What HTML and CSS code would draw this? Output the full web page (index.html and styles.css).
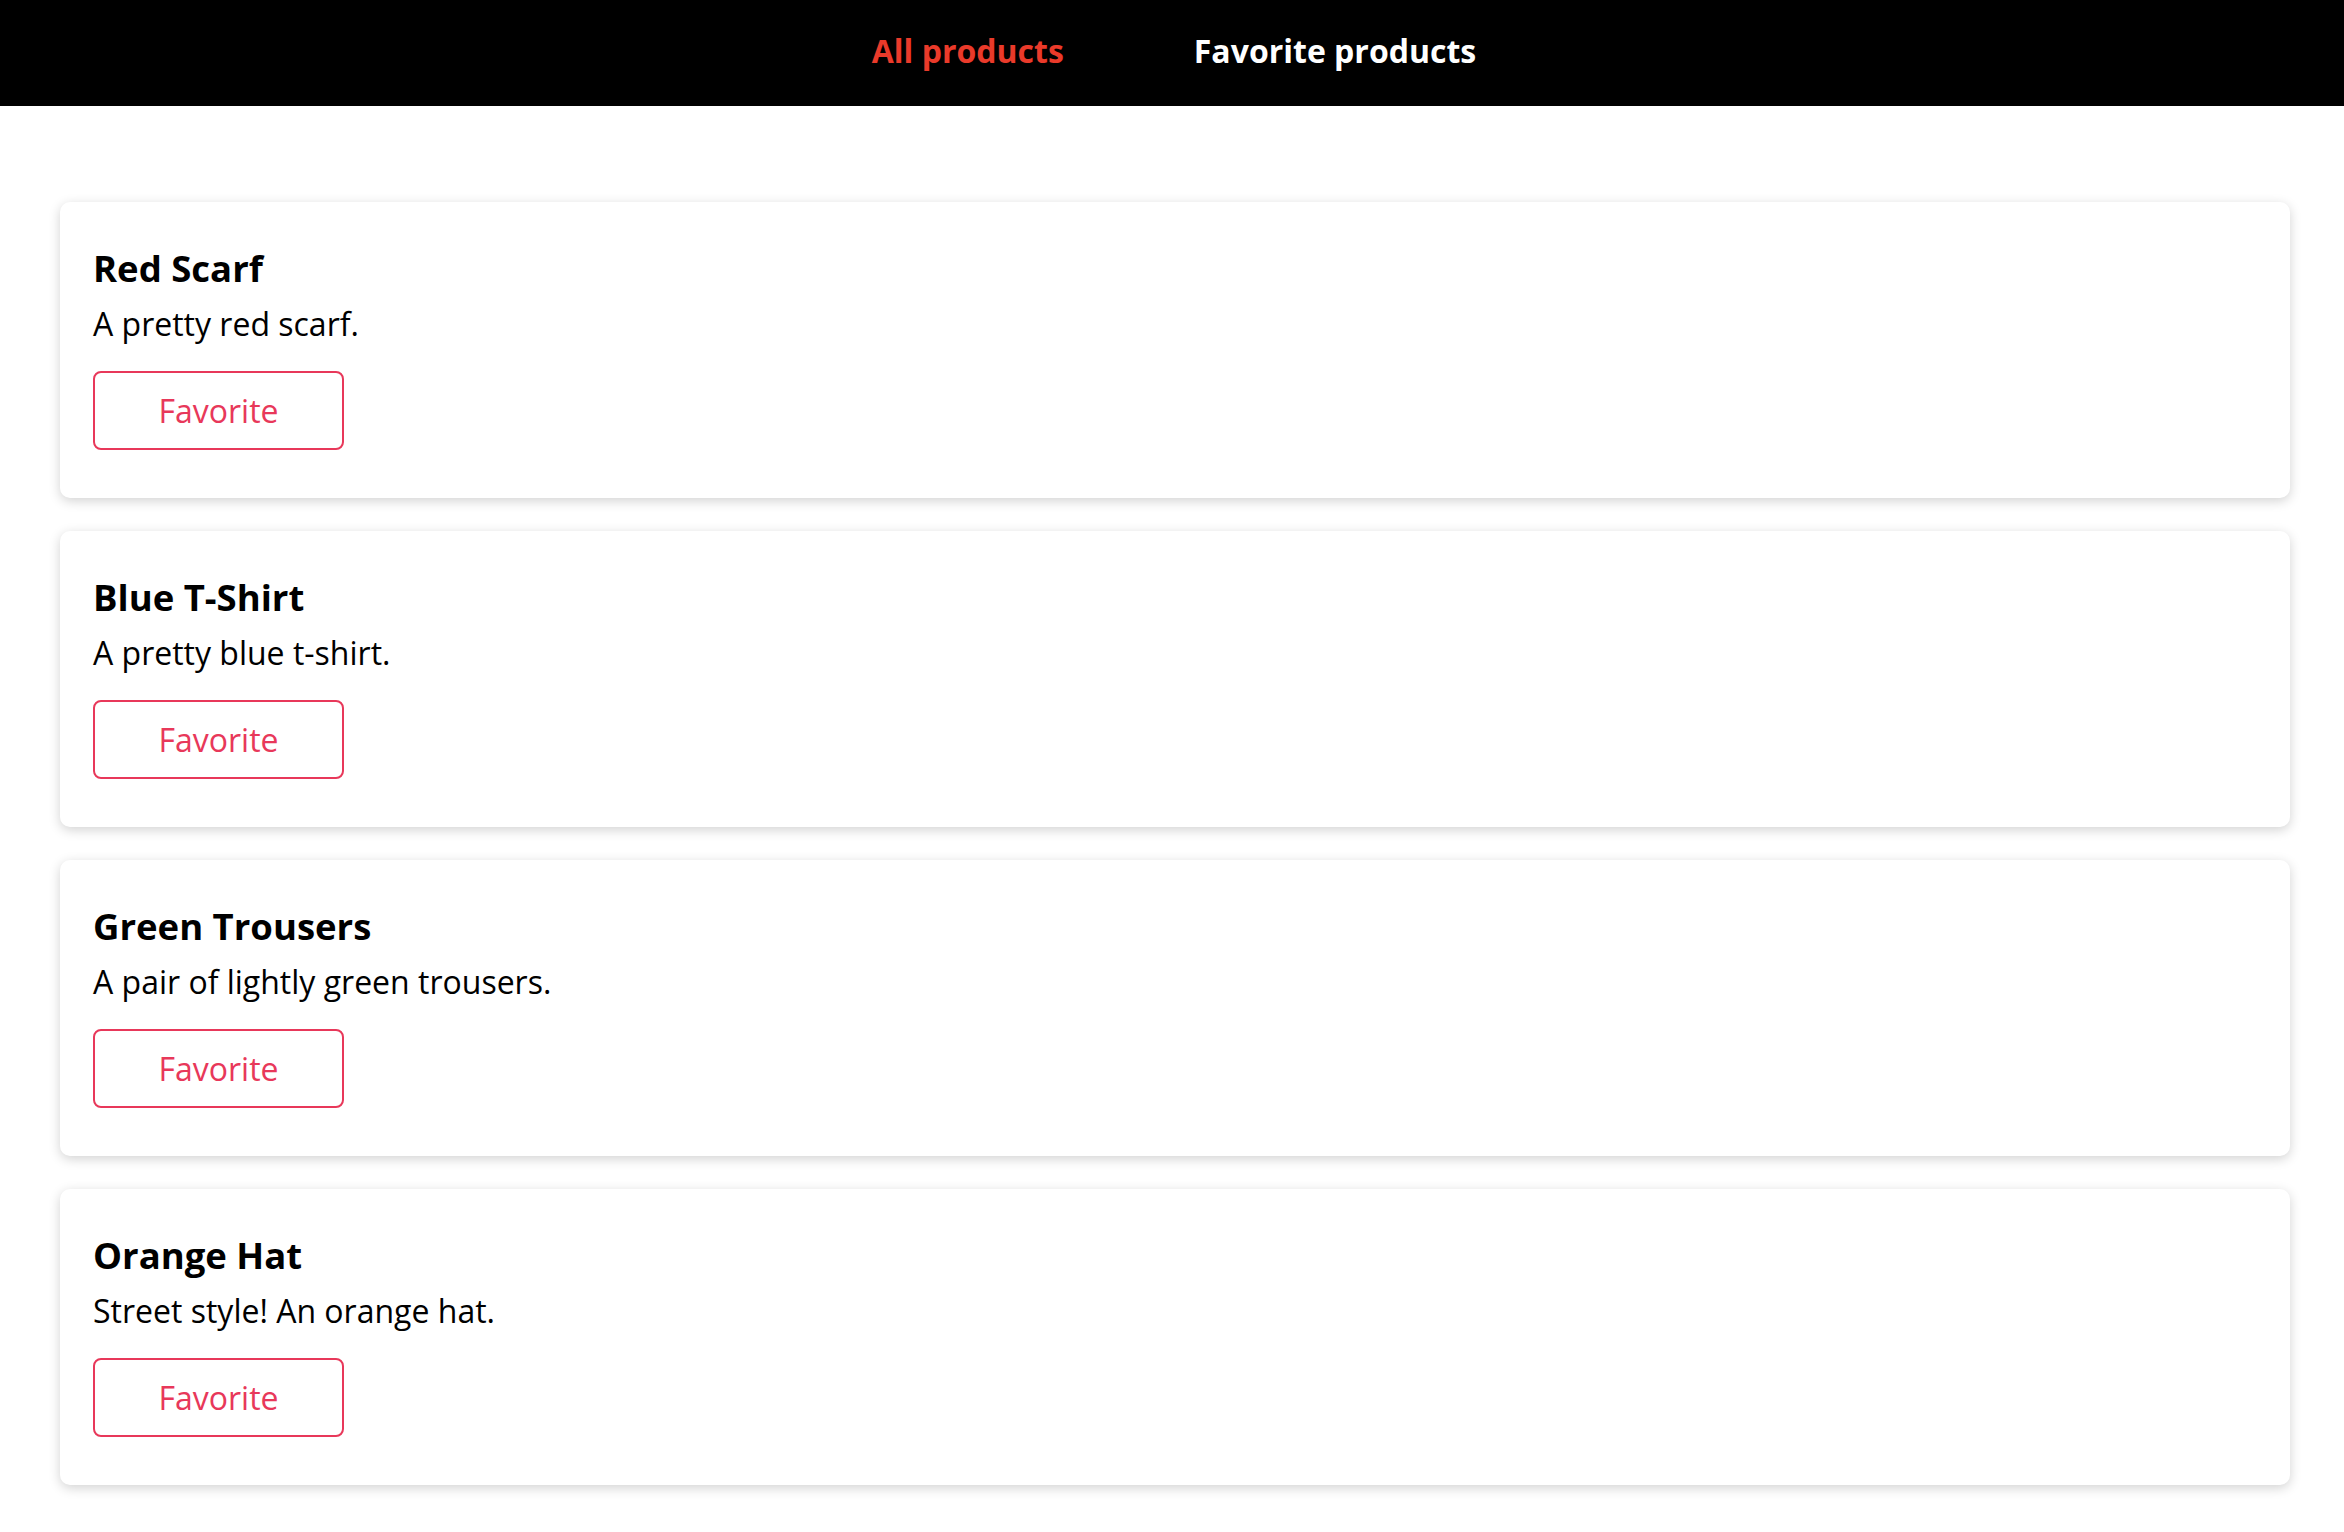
FILE: index.html
```html
<!DOCTYPE html>
<html lang="en">
<head>
<meta charset="utf-8">
<title>Products</title>
<link rel="stylesheet" href="styles.css">
</head>
<body>
<header class="main-header">
  <nav class="main-nav">
    <a class="nav-link active" href="#">All products</a>
    <a class="nav-link" href="#">Favorite products</a>
  </nav>
</header>
<main class="products">
  <ul class="products-list">
    <li class="card">
      <h2 class="card-title">Red Scarf</h2>
      <p class="card-desc">A pretty red scarf.</p>
      <button class="fav-btn">Favorite</button>
    </li>
    <li class="card">
      <h2 class="card-title">Blue T-Shirt</h2>
      <p class="card-desc">A pretty blue t-shirt.</p>
      <button class="fav-btn">Favorite</button>
    </li>
    <li class="card">
      <h2 class="card-title">Green Trousers</h2>
      <p class="card-desc">A pair of lightly green trousers.</p>
      <button class="fav-btn">Favorite</button>
    </li>
    <li class="card">
      <h2 class="card-title">Orange Hat</h2>
      <p class="card-desc">Street style! An orange hat.</p>
      <button class="fav-btn">Favorite</button>
    </li>
  </ul>
</main>
</body>
</html>
```

FILE: styles.css
```css
* {
  box-sizing: border-box;
}

html, body {
  margin: 0;
  padding: 0;
  background: #ffffff;
  font-family: "Open Sans", "Noto Sans", sans-serif;
  color: #000000;
}

.main-header {
  height: 106px;
  background: #000000;
  padding-top: 29px;
}

.main-nav {
  display: flex;
  justify-content: center;
  gap: 130px;
  padding-left: 4px;
}

.nav-link {
  font-size: 32px;
  font-weight: 700;
  color: #ffffff;
  text-decoration: none;
  line-height: normal;
}

.nav-link.active {
  color: #ea3a2a;
}

.products {
  margin: 96px 54px 40px 60px;
}

.products-list {
  list-style: none;
  margin: 0;
  padding: 0;
  display: flex;
  flex-direction: column;
  gap: 33px;
}

.card {
  background: #ffffff;
  border-radius: 10px;
  box-shadow: 0 3px 12px rgba(0, 0, 0, 0.18);
  padding: 41px 33px 48px;
}

.card-title {
  margin: 0;
  font-size: 36.5px;
  font-weight: 700;
  line-height: normal;
}

.card-desc {
  margin: 9.4px 0 25.6px;
  font-size: 32px;
  line-height: normal;
}

.fav-btn {
  display: block;
  width: 251px;
  padding: 16px 0;
  font-family: "Open Sans", "Noto Sans", sans-serif;
  font-size: 32px;
  line-height: normal;
  color: #e8385a;
  background: #ffffff;
  border: 2px solid #e8385a;
  border-radius: 8px;
  cursor: pointer;
}
```
